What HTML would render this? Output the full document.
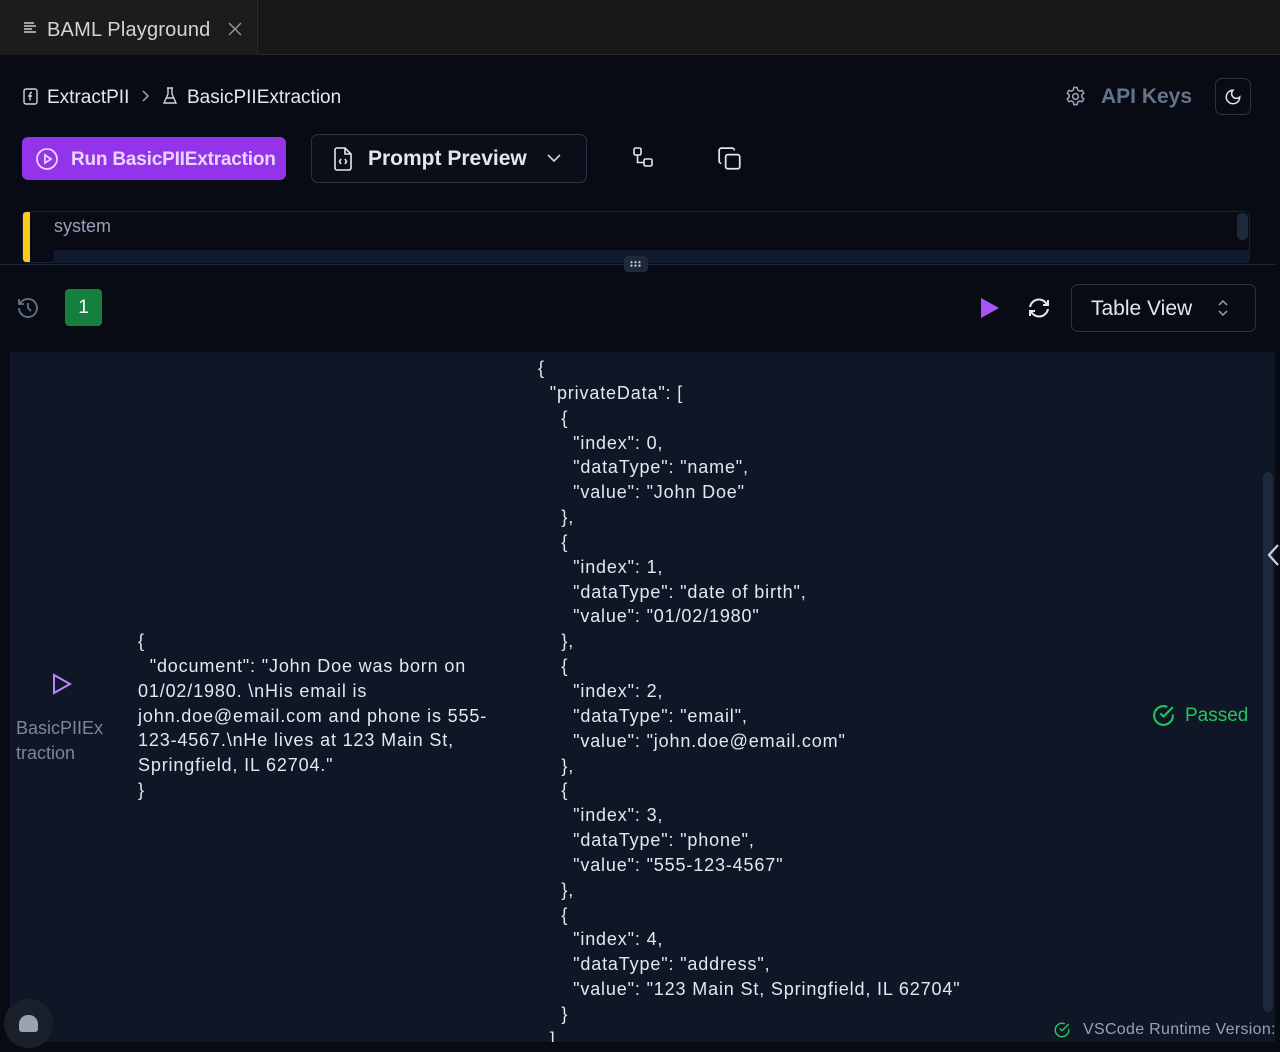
<!DOCTYPE html>
<html><head><meta charset="utf-8"><style>
*{margin:0;padding:0;box-sizing:border-box}
body{width:1280px;height:1052px;background:#080b14;font-family:"Liberation Sans",sans-serif;color:#cbd5e1;position:relative;overflow:hidden}
.a{position:absolute}
.tabbar{left:0;top:0;width:1280px;height:55px;background:#181818;border-bottom:1px solid #2b2b2b}
.tab{left:0;top:0;width:258px;height:55px;background:#1c1c1c;border-right:1px solid #2b2b2b}
.t{white-space:pre;font-size:18px;line-height:24.85px;color:#e2e8f0;letter-spacing:0.85px}
</style></head><body>
<div class="a tabbar"></div>
<div class="a tab"></div>
<svg class="a" style="left:23px;top:21px" width="14" height="14" viewBox="0 0 14 14" stroke="#ccc" stroke-width="1.4"><path d="M1 2h10M1 5h12M1 8h8M1 11h12"/></svg>
<div class="a" style="left:47px;top:19px;font-size:20px;color:#d4d4d4;letter-spacing:0.2px">BAML Playground</div>
<svg class="a" style="left:228px;top:22px" width="14" height="14" stroke="#999" stroke-width="1.4"><path d="M1 1l12 12M13 1L1 13"/></svg>

<svg class="a" style="left:23px;top:88px" width="16" height="17" fill="none" stroke="#cbd5e1" stroke-width="1.4"><rect x="1" y="1" width="13" height="15" rx="2"/><path d="M9 4.5c-2 0-2 1-2 3v5M5 8h4"/></svg>
<div class="a" style="left:47px;top:87px;font-size:19px;color:#e2e8f0">ExtractPII</div>
<svg class="a" style="left:140px;top:89px" width="10" height="14" fill="none" stroke="#aaa" stroke-width="1.5"><path d="M3 2l5 5-5 5"/></svg>
<svg class="a" style="left:162px;top:87px" width="16" height="18" fill="none" stroke="#cbd5e1" stroke-width="1.4"><path d="M5 1h6M6 1v6L2 16h12L10 7V1M4 11h8"/></svg>
<div class="a" style="left:187px;top:87px;font-size:19px;color:#e2e8f0">BasicPIIExtraction</div>

<svg class="a" style="left:1064px;top:85px" width="23" height="23" viewBox="0 0 24 24" fill="none" stroke="#94a3b8" stroke-width="1.6"><path d="M10.3 2.6h3.4l.6 2.6 2 1.2 2.6-.8 1.7 2.9-2 1.8v2.4l2 1.8-1.7 2.9-2.6-.8-2 1.2-.6 2.6h-3.4l-.6-2.6-2-1.2-2.6.8-1.7-2.9 2-1.8v-2.4l-2-1.8 1.7-2.9 2.6.8 2-1.2z"/><circle cx="12" cy="12" r="3"/></svg>
<div class="a" style="left:1101px;top:85px;font-size:21px;font-weight:bold;color:#64748b">API Keys</div>
<div class="a" style="left:1215px;top:78px;width:36px;height:37px;border:1px solid #2a3344;border-radius:7px"></div>
<svg class="a" style="left:1224px;top:88px" width="18" height="18" viewBox="0 0 24 24" fill="none" stroke="#e2e8f0" stroke-width="2"><path d="M12 3a6 6 0 0 0 9 9 9 9 0 1 1-9-9z"/></svg>

<div class="a" style="left:22px;top:137px;width:264px;height:43px;background:#9333ea;border-radius:6px"></div>
<svg class="a" style="left:35px;top:147px" width="24" height="24" viewBox="0 0 24 24" fill="none" stroke="#e9d5ff" stroke-width="1.8"><circle cx="12" cy="12" r="10"/><path d="M10 8l6 4-6 4z"/></svg>
<div class="a" style="left:71px;top:149px;font-size:19px;font-weight:bold;color:#e9d5ff;letter-spacing:-0.2px">Run BasicPIIExtraction</div>
<div class="a" style="left:311px;top:134px;width:276px;height:49px;border:1px solid #2a3344;border-radius:7px;background:#0a0e18"></div>
<svg class="a" style="left:333px;top:147px" width="20" height="24" viewBox="0 0 20 24" fill="none" stroke="#e2e8f0" stroke-width="1.6"><path d="M2 3a2 2 0 0 1 2-2h8l6 6v14a2 2 0 0 1-2 2H4a2 2 0 0 1-2-2zM12 1v6h6M8 12l-1.5 2.5L8 17M12 12l1.5 2.5L12 17"/></svg>
<div class="a" style="left:368px;top:147px;font-size:21px;font-weight:bold;color:#e2e8f0">Prompt Preview</div>
<svg class="a" style="left:546px;top:152px" width="16" height="12" fill="none" stroke="#cbd5e1" stroke-width="1.6"><path d="M2 3l6 6 6-6"/></svg>
<svg class="a" style="left:632px;top:146px" width="24" height="24" viewBox="0 0 24 24" fill="none" stroke="#e2e8f0" stroke-width="1.6"><rect x="2" y="2" width="7" height="7" rx="1.5"/><rect x="12" y="13" width="8" height="7" rx="1.5"/><path d="M5.5 9v7.5H12"/></svg>
<svg class="a" style="left:717px;top:146px" width="26" height="26" viewBox="0 0 24 24" fill="none" stroke="#e2e8f0" stroke-width="1.6"><rect x="8" y="8" width="13" height="13" rx="2"/><path d="M4 16a2 2 0 0 1-2-2V4a2 2 0 0 1 2-2h10a2 2 0 0 1 2 2"/></svg>

<div class="a" style="left:22px;top:211px;width:1228px;height:52px;border:1px solid #1a2130;border-radius:6px;background:#080b14"></div>
<div class="a" style="left:23px;top:212px;width:7px;height:50px;background:#facc15;border-radius:3px 0 0 3px"></div>
<div class="a" style="left:54px;top:216px;font-size:18px;color:#94a3b8">system</div>
<div class="a" style="left:54px;top:250px;width:1195px;height:13px;background:#101a2c"></div>
<div class="a" style="left:1237px;top:213px;width:11px;height:27px;background:#1e293b;border-radius:5px"></div>
<div class="a" style="left:0;top:264px;width:1275px;height:1px;background:#1e293b"></div>
<div class="a" style="left:624px;top:256px;width:24px;height:16px;background:#1e293b;border-radius:4px"></div>
<svg class="a" style="left:630px;top:261px" width="12" height="6" fill="#cbd5e1"><circle cx="1.5" cy="1.2" r="1.1"/><circle cx="5.5" cy="1.2" r="1.1"/><circle cx="9.5" cy="1.2" r="1.1"/><circle cx="1.5" cy="4.6" r="1.1"/><circle cx="5.5" cy="4.6" r="1.1"/><circle cx="9.5" cy="4.6" r="1.1"/></svg>

<svg class="a" style="left:16px;top:296px" width="24" height="24" viewBox="0 0 24 24" fill="none" stroke="#64748b" stroke-width="1.8"><path d="M3 12a9 9 0 1 0 3-6.7L3 8M3 3v5h5M12 7v5l3 3"/></svg>
<div class="a" style="left:65px;top:289px;width:37px;height:37px;background:#15803d;border-radius:4px;color:#fff;font-size:19px;text-align:center;line-height:38px">1</div>
<svg class="a" style="left:980px;top:297px" width="20" height="22"><path d="M1 1L19 11 1 21z" fill="#a855f7"/></svg>
<svg class="a" style="left:1027px;top:296px" width="24" height="24" viewBox="0 0 24 24" fill="none" stroke="#e2e8f0" stroke-width="2"><path d="M3 11a9 9 0 0 1 16-4l2 2M21 4v5h-5M21 13a9 9 0 0 1-16 4l-2-2M3 20v-5h5"/></svg>
<div class="a" style="left:1071px;top:284px;width:185px;height:48px;border:1px solid #2a3344;border-radius:7px"></div>
<div class="a" style="left:1091px;top:297px;font-size:21px;color:#e2e8f0">Table View</div>
<svg class="a" style="left:1217px;top:299px" width="12" height="18" fill="none" stroke="#94a3b8" stroke-width="1.5"><path d="M2 6l4-4 4 4M2 12l4 4 4-4"/></svg>

<div class="a" style="left:10px;top:352px;width:1265px;height:690px;background:#0f1626"></div>
<div class="a" style="left:1263px;top:472px;width:10px;height:540px;background:#1e293b;border-radius:5px"></div>
<svg class="a" style="left:1266px;top:543px" width="14" height="24" fill="none" stroke="#cbd5e1" stroke-width="2.2"><path d="M12 2L3 12l9 10"/></svg>

<svg class="a" style="left:52px;top:673px" width="20" height="22" fill="none" stroke="#c084fc" stroke-width="2"><path d="M2 2l16 9-16 9z"/></svg>
<div class="a" style="left:16px;top:716px;font-size:18px;line-height:25px;color:#7b8699">BasicPIIEx<br>traction</div>
<div class="a t" style="left:138px;top:629px">{
  "document": "John Doe was born on
01/02/1980. \nHis email is
john.doe@email.com and phone is 555-
123-4567.\nHe lives at 123 Main St,
Springfield, IL 62704."
}</div>
<div class="a t" style="left:538px;top:356px">{
  "privateData": [
    {
      "index": 0,
      "dataType": "name",
      "value": "John Doe"
    },
    {
      "index": 1,
      "dataType": "date of birth",
      "value": "01/02/1980"
    },
    {
      "index": 2,
      "dataType": "email",
      "value": "john.doe@email.com"
    },
    {
      "index": 3,
      "dataType": "phone",
      "value": "555-123-4567"
    },
    {
      "index": 4,
      "dataType": "address",
      "value": "123 Main St, Springfield, IL 62704"
    }
  ]</div>
<div class="a" style="left:0;top:1042px;width:1280px;height:10px;background:#080b14"></div>
<svg class="a" style="left:1151px;top:703px" width="25" height="25" viewBox="0 0 24 24" fill="none" stroke="#22c55e" stroke-width="2"><path d="M21 11v1a9 9 0 1 1-5.3-8.2M21 4L12 13l-3-3"/></svg>
<div class="a" style="left:1185px;top:705px;font-size:19px;color:#22c55e">Passed</div>
<svg class="a" style="left:1053px;top:1021px" width="18" height="18" viewBox="0 0 24 24" fill="none" stroke="#22c55e" stroke-width="2"><path d="M21 11v1a9 9 0 1 1-5.3-8.2M21 4L12 13l-3-3"/></svg>
<div class="a" style="left:1083px;top:1021px;font-size:16px;color:#94a3b8;white-space:nowrap;letter-spacing:0.3px">VSCode Runtime Version:</div>
<div class="a" style="left:4px;top:999px;width:49px;height:49px;border-radius:50%;background:#1a202b"></div>
<div class="a" style="left:19px;top:1015px;width:19px;height:17px;border-radius:9px 9px 3px 3px;background:#9ca3af"></div>
</body></html>
